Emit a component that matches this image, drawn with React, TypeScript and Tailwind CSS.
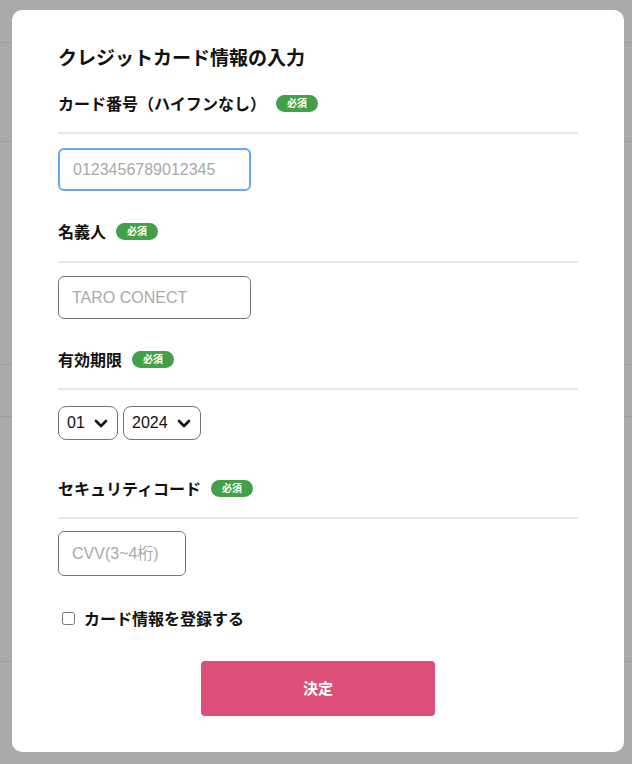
import React from "react";

const Badge = () => (
    <span className="ml-2.5 inline-flex h-[17px] w-[42px] items-center justify-center rounded-full bg-[#43a047] text-[10px] font-bold leading-none text-white">
        必須
    </span>
);

const Label = ({ text }: { text: string }) => (
    <div className="flex h-6 items-center text-[16px] font-bold leading-6 text-[#111]">
        <span>{text}</span>
        <Badge />
    </div>
);

const Divider = ({ className }: { className: string }) => (
    <div className={"h-[2px] w-full bg-[#e8e8e8] " + className} />
);

const Chevron = () => (
    <svg width="14" height="9" viewBox="0 0 14 9" fill="none" className="ml-[9px]">
        <path d="M2 2l5 5 5-5" stroke="#111" strokeWidth="2.6" strokeLinecap="round" strokeLinejoin="round" />
    </svg>
);

const Select = ({ value, width }: { value: string; width: string }) => (
    <div className={"flex h-[34px] items-center rounded-[8px] border border-[#767676] pl-[8px] text-[16px] text-[#111] " + width}>
        <span>{value}</span>
        <Chevron />
    </div>
);

const App = () => {
    const bgLines = [43, 142, 365, 417, 662];
    return (
        <div className="relative h-[764px] w-full overflow-hidden bg-[#aaaaaa] font-['Liberation_Sans','Noto_Sans_CJK_JP',sans-serif]">
            {/* page under the overlay */}
            <div className="flex flex-col">
                {bgLines.map((y, i) => (
                    <div
                        key={y}
                        className="border-b border-[#9c9c9c]"
                        style={{ height: i === 0 ? y : y - bgLines[i - 1] }}
                    />
                ))}
            </div>

            <div className="absolute inset-0 pl-3 pr-2 pt-[10px]">
                <div className="h-[742px] rounded-[10px] bg-white px-[46px] pt-[33px] font-['Noto_Sans_CJK_JP','Liberation_Sans',sans-serif]">
                    <h1 className="h-[27px] text-[19px] font-bold leading-[27px] text-[#111]">
                        クレジットカード情報の入力
                    </h1>

                    <div className="mt-[21px]">
                        <Label text="カード番号（ハイフンなし）" />
                    </div>
                    <Divider className="mt-[17px]" />
                    <input
                        placeholder="0123456789012345"
                        className="mt-[14px] block h-[43px] w-[193px] rounded-[6px] border-2 border-[#65a9f1] px-[13px] font-['Liberation_Sans',sans-serif] text-[16px] outline-none placeholder:text-[#a9a9a9]"
                    />

                    <div className="mt-[28px]">
                        <Label text="名義人" />
                    </div>
                    <Divider className="mt-[18px]" />
                    <input
                        placeholder="TARO CONECT"
                        className="mt-[13px] block h-[43px] w-[193px] rounded-[6px] border border-[#767676] px-[13px] font-['Liberation_Sans',sans-serif] text-[16px] outline-none placeholder:text-[#a9a9a9]"
                    />

                    <div className="mt-[28px]">
                        <Label text="有効期限" />
                    </div>
                    <Divider className="mt-[17px]" />
                    <div className="mt-[16px] flex gap-[5px] font-['Liberation_Sans',sans-serif]">
                        <Select value="01" width="w-[60px]" />
                        <Select value="2024" width="w-[78px]" />
                    </div>

                    <div className="mt-[36px]">
                        <Label text="セキュリティコード" />
                    </div>
                    <Divider className="mt-[17px]" />
                    <input
                        placeholder="CVV(3~4桁)"
                        className="mt-[12px] block h-[45px] w-[128px] rounded-[6px] border border-[#767676] px-[13px] font-['Liberation_Sans','Noto_Sans_CJK_JP',sans-serif] text-[16px] outline-none placeholder:text-[#a9a9a9]"
                    />

                    <label className="mt-[30px] flex h-6 items-center pl-[4px]">
                        <input type="checkbox" className="h-[13px] w-[13px] rounded-[3px] border-[#767676]" />
                        <span className="ml-[9px] text-[16px] font-bold text-[#111]">カード情報を登録する</span>
                    </label>

                    <div className="mt-[31px] flex justify-center">
                        <button className="h-[55px] w-[234px] rounded-[4px] bg-[#db4f79] text-[15px] font-bold text-white">
                            決定
                        </button>
                    </div>
                </div>
            </div>
        </div>
    );
};

export default App;
